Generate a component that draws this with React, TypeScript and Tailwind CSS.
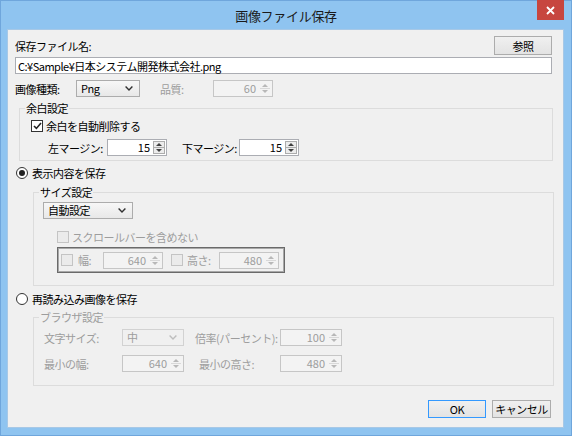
import React from 'react';

function SpinArrows({ disabled }: { disabled?: boolean }) {
  const c = disabled ? '#b8b8b8' : '#404040';
  return (
    <div
      className={`mr-[1px] w-[12px] h-[13px] shrink-0 flex flex-col border ${
        disabled ? 'border-transparent' : 'border-[#acacac] bg-[#ececec]'
      }`}
    >
      <div className="flex-1 flex items-center justify-center">
        <svg width="6" height="3" viewBox="0 0 6 3">
          <path d="M0 3 L3 0 L6 3 Z" fill={c} />
        </svg>
      </div>
      <div className={`h-px ${disabled ? 'bg-[#d8d8d8]' : 'bg-[#acacac]'}`} />
      <div className="flex-1 flex items-center justify-center">
        <svg width="6" height="3" viewBox="0 0 6 3">
          <path d="M0 0 L6 0 L3 3 Z" fill={c} />
        </svg>
      </div>
    </div>
  );
}

function Spin({ value, disabled, w }: { value: string; disabled?: boolean; w: string }) {
  return (
    <div
      className={`${w} h-[17px] shrink-0 flex items-center border ${
        disabled ? 'border-[#c6c6c6] bg-[#f3f3f3] text-[#9d9d9d]' : 'border-[#abadb3] bg-white text-black'
      }`}
    >
      <span className="flex-1 text-right pr-[3px] leading-none tracking-normal">{value}</span>
      <SpinArrows disabled={disabled} />
    </div>
  );
}

function Chevron({ disabled }: { disabled?: boolean }) {
  return (
    <svg width="8" height="5" viewBox="0 0 8 5">
      <path d="M0.6 0.6 L4 4 L7.4 0.6" fill="none" stroke={disabled ? '#bdbdbd' : '#303030'} strokeWidth="1.4" />
    </svg>
  );
}

function Select({ value, disabled, w }: { value: string; disabled?: boolean; w: string }) {
  return (
    <div
      className={`${w} h-[17px] shrink-0 flex items-center pl-[4px] pr-[6px] border ${
        disabled
          ? 'border-[#d2d2d2] bg-[#f0f0f0] text-[#9d9d9d]'
          : 'border-[#acacac] bg-linear-to-b from-[#f7f7f7] to-[#e8e8e8] text-black'
      }`}
    >
      <span className="flex-1 leading-none">{value}</span>
      <Chevron disabled={disabled} />
    </div>
  );
}

function Check({ checked, disabled }: { checked?: boolean; disabled?: boolean }) {
  return (
    <div
      className={`w-[12px] h-[12px] shrink-0 border flex items-center justify-center ${
        disabled ? 'border-[#c4c4c4] bg-[#ebebeb]' : 'border-[#333333] bg-white'
      }`}
    >
      {checked && (
        <svg width="9" height="8" viewBox="0 0 9 8">
          <path d="M1 4 L3.4 6.4 L8 1" fill="none" stroke="#222" strokeWidth="1.6" />
        </svg>
      )}
    </div>
  );
}

function Radio({ checked }: { checked?: boolean }) {
  return (
    <div className="w-[12px] h-[12px] shrink-0 rounded-full border border-[#333333] bg-white flex items-center justify-center">
      {checked && <div className="w-[6px] h-[6px] rounded-full bg-[#222222]" />}
    </div>
  );
}

function Button({ label, primary }: { label: string; primary?: boolean }) {
  return (
    <div
      className={`h-[18px] flex items-center justify-center border bg-linear-to-b from-[#f0f0f0] to-[#e3e3e3] ${
        primary ? 'w-[58px] border-[#3399ff]' : 'w-[59px] border-[#acacac]'
      }`}
    >
      {label}
    </div>
  );
}

export default function App() {
  return (
    <div className="w-[572px] h-[436px] bg-[#8fc4f0] border border-[#6fa6dc] flex flex-col font-['Noto_Sans_CJK_JP',sans-serif] text-[11px] text-black leading-[14px] tracking-[-0.5px] whitespace-nowrap select-none">
      {/* title bar */}
      <div className="relative h-[28px] flex items-center justify-center">
        <span className="text-[13px] text-[#1a1a1a] pt-[1px] tracking-[-0.3px]">画像ファイル保存</span>
        <div className="absolute right-[7px] top-[-1px] w-[27px] h-[20px] bg-[#c7463f] flex items-center justify-center">
          <svg width="9" height="9" viewBox="0 0 9 9">
            <path d="M1 1 L8 8 M8 1 L1 8" stroke="#fff" strokeWidth="1.8" />
          </svg>
        </div>
      </div>

      {/* client area */}
      <div className="ml-[6px] w-[557px] h-[399px] bg-[#f0f0f0] border border-[#a7c8e6] flex flex-col">
        {/* file name */}
        <div className="mt-[6px] h-[19px] flex items-center justify-between pl-[7px] pr-[11px]">
          <span>保存ファイル名:</span>
          <div className="w-[58px] h-[19px] flex items-center justify-center border border-[#acacac] bg-linear-to-b from-[#f0f0f0] to-[#e3e3e3]">
            参照
          </div>
        </div>
        <div className="mt-[2px] ml-[7px] w-[537px] h-[17px] border border-[#abadb3] bg-white flex items-center pl-[2px]">
          C:¥Sample¥日本システム開発株式会社.png
        </div>

        {/* image type */}
        <div className="mt-[6px] ml-[7px] h-[17px] flex items-center">
          <span className="w-[61px] shrink-0">画像種類:</span>
          <Select value="Png" w="w-[64px]" />
          <span className="ml-[20px] w-[53px] shrink-0 text-[#9d9d9d]">品質:</span>
          <Spin value="60" disabled w="w-[60px]" />
        </div>

        {/* margin group */}
        <fieldset className="mt-[4px] ml-[11px] w-[534px] border border-[#dcdcdc] pb-[4px]">
          <legend className="ml-[5px] px-[1px] leading-[14px]">余白設定</legend>
          <div className="mt-[3px] ml-[11px] h-[16px] flex items-center gap-[3px]">
            <Check checked />
            <span>余白を自動削除する</span>
          </div>
          <div className="mt-[5px] ml-[28px] h-[17px] flex items-center">
            <span className="w-[59px] shrink-0">左マージン:</span>
            <Spin value="15" w="w-[60px]" />
            <span className="ml-[15px] w-[57px] shrink-0">下マージン:</span>
            <Spin value="15" w="w-[60px]" />
          </div>
        </fieldset>

        {/* save displayed contents */}
        <div className="mt-[4px] ml-[8px] h-[16px] flex items-center gap-[4px]">
          <Radio checked />
          <span>表示内容を保存</span>
        </div>

        <fieldset className="mt-[4px] ml-[25px] w-[521px] border border-[#dcdcdc] pb-[12px]">
          <legend className="ml-[5px] px-[1px] leading-[14px]">サイズ設定</legend>
          <div className="mt-[3px] ml-[9px] flex">
            <Select value="自動設定" w="w-[90px]" />
          </div>
          <div className="mt-[10px] ml-[23px] h-[16px] flex items-center gap-[3px] text-[#9d9d9d]">
            <Check disabled />
            <span>スクロールバーを含めない</span>
          </div>
          <div className="mt-[2px] ml-[23px] w-[228px] h-[26px] border border-[#6a6a6a] shadow-[inset_0_0_0_1px_#a8a8a8] flex items-center pl-[3px] text-[#9d9d9d]">
            <Check disabled />
            <span className="ml-[5px] w-[25px] shrink-0">幅:</span>
            <Spin value="640" disabled w="w-[60px]" />
            <div className="ml-[8px]">
              <Check disabled />
            </div>
            <span className="ml-[4px] w-[32px] shrink-0">高さ:</span>
            <Spin value="480" disabled w="w-[60px]" />
          </div>
        </fieldset>

        {/* save reloaded image */}
        <div className="mt-[5px] ml-[8px] h-[16px] flex items-center gap-[4px]">
          <Radio />
          <span>再読み込み画像を保存</span>
        </div>

        <fieldset className="mt-[3px] ml-[25px] w-[521px] border border-[#dcdcdc] pb-[13px] text-[#9d9d9d]">
          <legend className="ml-[5px] px-[1px] leading-[14px]">ブラウザ設定</legend>
          <div className="mt-[5px] ml-[10px] h-[17px] flex items-center">
            <span className="w-[78px] shrink-0">文字サイズ:</span>
            <Select value="中" disabled w="w-[62px]" />
            <span className="ml-[11px] w-[85px] shrink-0">倍率(パーセント):</span>
            <Spin value="100" disabled w="w-[62px]" />
          </div>
          <div className="mt-[9px] ml-[10px] h-[17px] flex items-center">
            <span className="w-[78px] shrink-0">最小の幅:</span>
            <Spin value="640" disabled w="w-[62px]" />
            <span className="ml-[15px] w-[81px] shrink-0">最小の高さ:</span>
            <Spin value="480" disabled w="w-[62px]" />
          </div>
        </fieldset>

        {/* dialog buttons */}
        <div className="mt-[14px] pr-[12px] flex justify-end gap-[6px]">
          <Button label="OK" primary />
          <Button label="キャンセル" />
        </div>
      </div>
    </div>
  );
}
